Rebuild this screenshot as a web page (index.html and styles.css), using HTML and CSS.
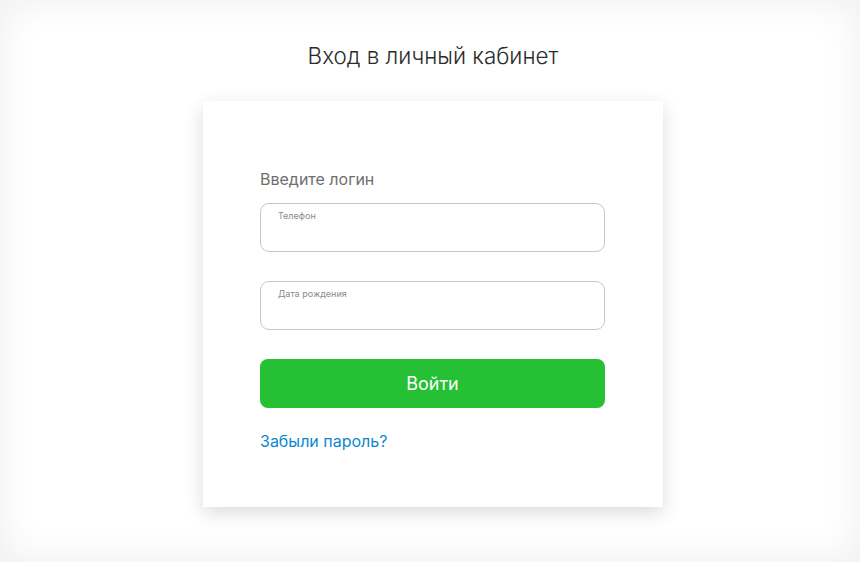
FILE: index.html
```html
<!DOCTYPE html>
<html lang="ru">
<head>
<meta charset="utf-8">
<title>Вход в личный кабинет</title>
<link rel="stylesheet" href="styles.css">
</head>
<body>
<div class="page">
  <h1 class="title">Вход в личный кабинет</h1>
  <div class="card">
    <div class="label">Введите логин</div>
    <div class="field">
      <span class="field-label">Телефон</span>
    </div>
    <div class="field">
      <span class="field-label">Дата рождения</span>
    </div>
    <button class="btn">Войти</button>
    <a class="link" href="#">Забыли пароль?</a>
  </div>
</div>
</body>
</html>
```
FILE: styles.css
```css
html, body {
  margin: 0;
  padding: 0;
}
body {
  width: 860px;
  height: 562px;
  overflow: hidden;
  background: #fff;
  font-family: Inter, "Noto Sans", sans-serif;
  box-shadow: inset 0 0 40px rgba(0,0,0,0.07);
}
.page {
  display: flex;
  flex-direction: column;
  align-items: center;
  padding-left: 6px;
  padding-top: 41px;
}
.title {
  margin: 0;
  font-size: 22.4px;
  font-weight: 300;
  line-height: 30px;
  color: #2b2b2b;
}
.card {
  margin-top: 30px;
  width: 345px;
  padding: 68px 58px 56px 57px;
  background: #fff;
  box-shadow: 0 6px 18px rgba(0,0,0,0.14);
  display: flex;
  flex-direction: column;
}
.label {
  font-size: 16px;
  line-height: 20px;
  color: #6e6e6e;
  margin-bottom: 14px;
  margin-left: 0;
}
.field {
  border: 1px solid #c6c6c6;
  border-radius: 9px;
  padding: 6px 17px;
  box-sizing: content-box;
  height: 35px;
  margin-bottom: 29px;
}
.field-label {
  display: block;
  font-size: 9px;
  line-height: 12px;
  color: #8a8a8a;
}
.btn {
  height: 49px;
  border: none;
  border-radius: 8px;
  background: #26c034;
  color: #fff;
  font-family: inherit;
  font-size: 18px;
  font-weight: 400;
  padding: 0;
}
.link {
  margin-top: 23px;
  margin-left: 0;
  font-size: 16px;
  line-height: 20px;
  color: #0b87cf;
  text-decoration: none;
}
```
